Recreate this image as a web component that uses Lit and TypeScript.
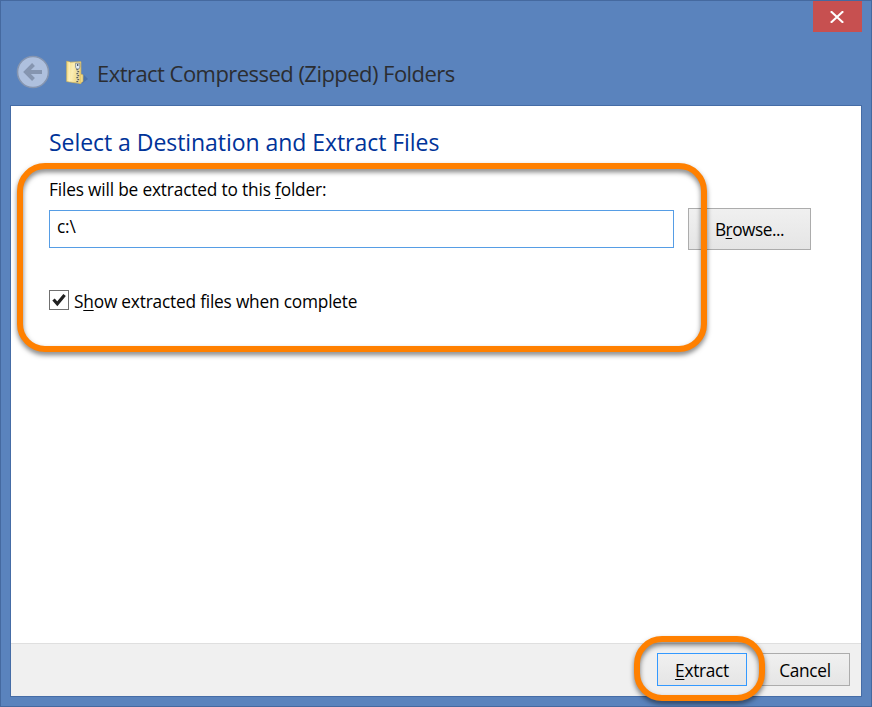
import { LitElement, html, css, svg } from "lit";
import { customElement } from "lit/decorators.js";

@customElement("zip-icon")
class ZipIcon extends LitElement {
  static styles = css`
    :host { display: block; width: 26px; height: 26px; }
    svg { display: block; }
  `;
  render() {
    const teeth = [9, 11, 13, 15, 17, 19, 21].map(
      (y, i) => svg`<rect x=${i % 2 ? 12.4 : 11.4} y=${y} width="1.8" height="1.2" fill="#5f5f58" />`
    );
    return html`
      <svg width="26" height="26" viewBox="0 0 26 26">
        <defs>
          <linearGradient id="g" x1="0" x2="1" y1="0" y2="0.3">
            <stop offset="0" stop-color="#f6dd83" />
            <stop offset="0.5" stop-color="#faedb5" />
            <stop offset="1" stop-color="#f0d478" />
          </linearGradient>
        </defs>
        <path d="M17 23.5 23 19 19 15z" fill="#3b6098" opacity="0.5" />
        <path d="M14.5 14.5h2.4q1 0 1 1v6l-3.4 2z" fill="#f8e59c" stroke="#dcb850" stroke-width="0.7" />
        <path d="M1.7 1.2 5.5 2.2 15.9 1.7V23.6L1.7 21.5z" fill="url(#g)" stroke="#d9b958" stroke-width="0.7" />
        <path d="M4.2 2.2V21.5" stroke="#fff2bd" stroke-width="1" />
        <path d="M12.7 8V22.4" stroke="#dcd6b4" stroke-width="2.4" />
        ${teeth}
        <path d="M10.6 3.2h4.2v4l-1 1.8h-2.2l-1-1.8z" fill="#e4ecf2" stroke="#77828a" stroke-width="0.8" />
        <path d="M12.7 4v2" stroke="#4c565e" stroke-width="1.3" />
      </svg>
    `;
  }
}

@customElement("app-root")
class AppRoot extends LitElement {
  static styles = css`
    * { box-sizing: border-box; }
    :host {
      display: flex;
      flex-direction: column;
      position: relative;
      box-sizing: border-box;
      width: 872px;
      height: 707px;
      padding: 0 9px 9px;
      border: 1px solid #45699f;
      background: #5a83bd;
      font-family: "Open Sans", "Noto Sans", sans-serif;
      color: #000;
      font-size: 17.3px;
      line-height: 24px;
      white-space: nowrap;
      overflow: hidden;
    }
    u { text-decoration-thickness: 1px; text-underline-offset: 2px; }
    .bar { display: flex; justify-content: flex-end; height: 31px; }
    .close {
      width: 49px; height: 31px; background: #c75050; padding-right: 2px;
      display: flex; align-items: center; justify-content: center;
    }
    .head { display: flex; align-items: center; height: 73px; padding: 0 0 0 6px; }
    .back { width: 34px; height: 34px; margin-top: 7px; }
    .zip { margin: 8px 0 0 15px; }
    .title { margin: 9px 0 0 6px; font-size: 22px; line-height: 30px; color: #2b2d31; letter-spacing: -0.54px; }
    .panel {
      flex: 1; display: flex; flex-direction: column;
      background: #fff; border: 1px solid #456ca6;
    }
    .body { flex: 1; padding: 21px 0 0 38px; }
    .heading { font-size: 23px; line-height: 30px; color: #003399; letter-spacing: -0.05px; }
    .label { margin-top: 21px; letter-spacing: -0.17px; }
    .row { display: flex; align-items: center; gap: 14px; height: 42px; margin-top: 6px; }
    .field {
      width: 625px; height: 38px; border: 1px solid #569de5;
      padding: 4px 7px; letter-spacing: -0.2px;
    }
    .btn {
      display: flex; align-items: center; justify-content: center;
      border: 1px solid #acacac; background: linear-gradient(#f0f0f0, #e5e5e5);
      width: 90px; height: 33px; padding-top: 3px; letter-spacing: -0.3px;
    }
    .browse { width: 123px; height: 42px; padding-top: 1px; letter-spacing: -0.5px; }
    .check { display: flex; align-items: center; gap: 5px; height: 26px; margin-top: 37px; }
    .box { width: 20px; height: 20px; border: 1px solid #707070; display: block; }
    .box svg { display: block; }
    .checktext { letter-spacing: -0.2px; padding-top: 3px; }
    .foot {
      display: flex; justify-content: flex-end; gap: 13px; height: 53px;
      border-top: 1px solid #dfdfdf; background: #f0f0f0; padding: 9px 11px 0;
    }
    .primary { border-color: #3399ff; }
    .ring {
      position: absolute; border: 6px solid #ff8000; border-radius: 28px;
      filter: drop-shadow(0 3px 2.5px rgba(0, 0, 0, 0.5));
    }
    .ring-a { left: 16px; top: 162px; width: 690px; height: 189px; }
    .ring-b { left: 633px; top: 635px; width: 131px; height: 65px; }
  `;

  render() {
    return html`
      <div class="bar">
        <div class="close">
          <svg width="14" height="12" viewBox="0 0 14 12">
            <path d="M0.8 0.3 13.2 11.7M13.2 0.3 0.8 11.7" stroke="#fff" stroke-width="2.1" />
          </svg>
        </div>
      </div>
      <div class="head">
        <svg class="back" viewBox="0 0 34 34">
          <circle cx="17" cy="17" r="15.5" fill="#aec0de" stroke="#8595b0" stroke-width="1.6" />
          <path d="M26 17H10M17.5 9.5 10 17l7.5 7.5" fill="none" stroke="#8595b0" stroke-width="4" />
        </svg>
        <zip-icon class="zip"></zip-icon>
        <div class="title">Extract Compressed (Zipped) Folders</div>
      </div>
      <div class="panel">
        <div class="body">
          <div class="heading">Select a Destination and Extract Files</div>
          <div class="label">Files will be extracted to this <u>f</u>older:</div>
          <div class="row">
            <div class="field">c:\\</div>
            <div class="btn browse"><span>B<u>r</u>owse...</span></div>
          </div>
          <div class="check">
            <span class="box">
              <svg width="18" height="18" viewBox="0 0 18 18">
                <path d="M3.5 8.5 7.3 12.7 14.6 4" fill="none" stroke="#212121" stroke-width="3.2" />
              </svg>
            </span>
            <span class="checktext">S<u>h</u>ow extracted files when complete</span>
          </div>
        </div>
        <div class="foot">
          <div class="btn primary"><span><u>E</u>xtract</span></div>
          <div class="btn"><span>Cancel</span></div>
        </div>
      </div>
      <div class="ring ring-a"></div>
      <div class="ring ring-b"></div>
    `;
  }
}
